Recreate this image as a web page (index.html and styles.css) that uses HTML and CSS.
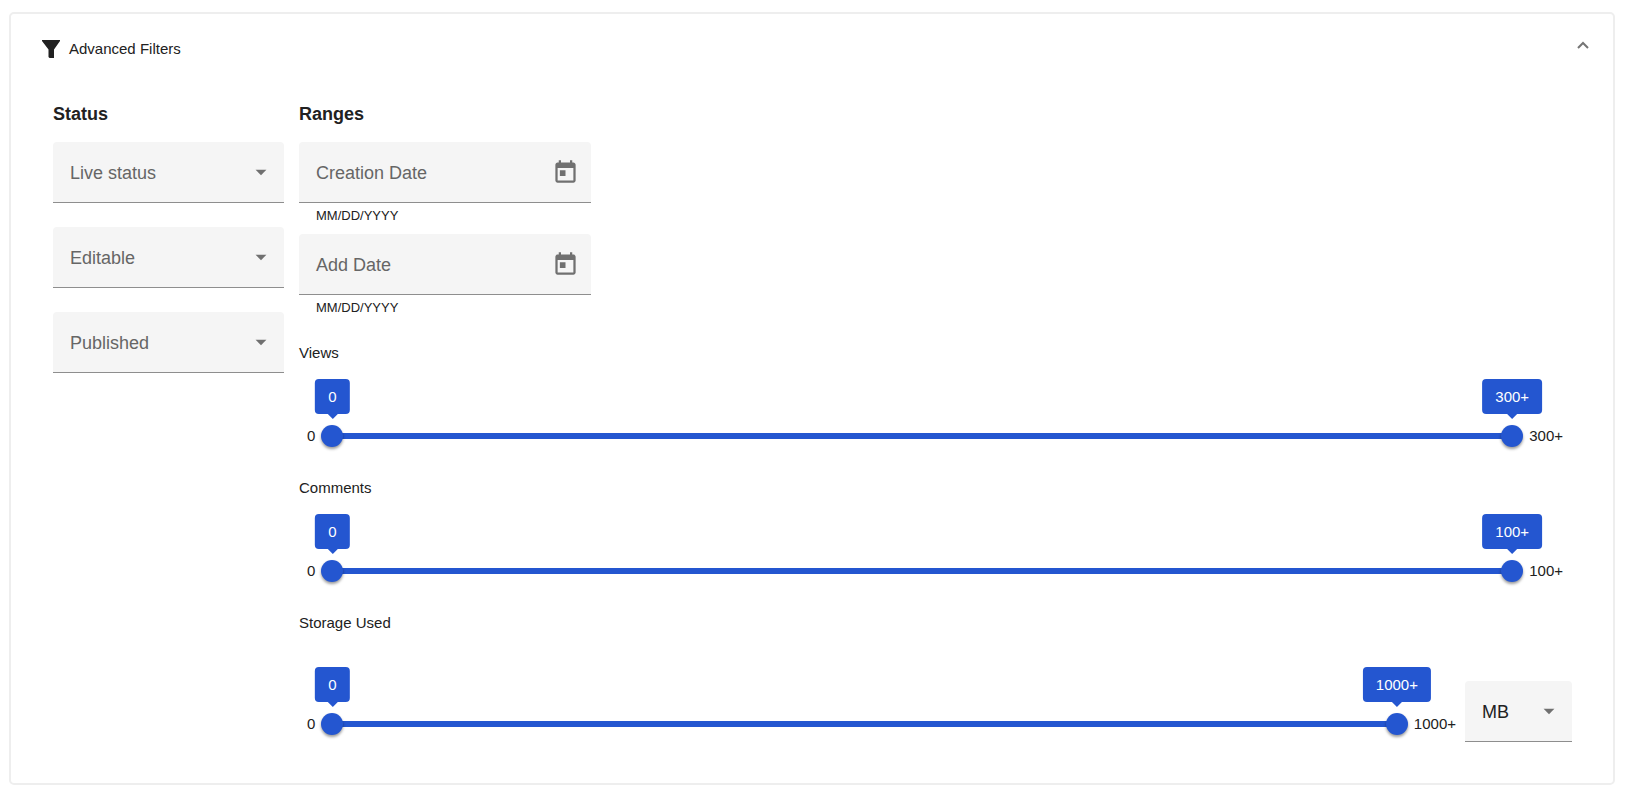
FILE: index.html
```html
<!DOCTYPE html>
<html lang="en">

<head>
    <meta charset="UTF-8">
    <meta name="viewport" content="width=device-width, initial-scale=1.0">
    <title>Advanced Filters</title>
    <link rel="stylesheet" href="styles.css">
</head>

<body>
    <section class="panel">
        <header class="panel-header">
            <svg class="filter-icon" viewBox="0 0 18 18" aria-hidden="true">
                <path d="M0 0h18v1L12 9.500V18H7.500L6.500 17V9.500L0 1z" />
            </svg>
            <span class="panel-title">Advanced Filters</span>
            <button class="toggle" type="button" aria-label="Collapse filters" aria-expanded="true">
                <svg viewBox="0 0 12 8" aria-hidden="true">
                    <path d="M1 7l5-5 5 5" />
                </svg>
            </button>
        </header>

        <form class="filters">
            <!-- Status -->
            <div class="status">
                <h2>Status</h2>
                <div class="status-fields">
                    <div class="field">
                        <select id="live-status">
                            <option value=""></option>
                            <option>Live</option>
                            <option>Offline</option>
                        </select>
                        <label for="live-status">Live status</label>
                        <svg class="arrow" viewBox="0 0 24 24" aria-hidden="true"><path d="M7 10l5 5 5-5z" /></svg>
                    </div>
                    <div class="field">
                        <select id="editable">
                            <option value=""></option>
                            <option>Yes</option>
                            <option>No</option>
                        </select>
                        <label for="editable">Editable</label>
                        <svg class="arrow" viewBox="0 0 24 24" aria-hidden="true"><path d="M7 10l5 5 5-5z" /></svg>
                    </div>
                    <div class="field">
                        <select id="published">
                            <option value=""></option>
                            <option>Yes</option>
                            <option>No</option>
                        </select>
                        <label for="published">Published</label>
                        <svg class="arrow" viewBox="0 0 24 24" aria-hidden="true"><path d="M7 10l5 5 5-5z" /></svg>
                    </div>
                </div>
            </div>

            <!-- Ranges -->
            <div class="ranges">
                <h2>Ranges</h2>
                <div class="date">
                    <div class="field">
                        <input id="creation-date" type="text" placeholder=" " aria-describedby="creation-help">
                        <label for="creation-date">Creation Date</label>
                        <button class="calendar" type="button" aria-label="Pick creation date">
                            <svg viewBox="0 0 24 24" aria-hidden="true"><path d="M19 3h-1V1h-2v2H8V1H6v2H5c-1.110 0-2 .9-2 2v14c0 1.100.89 2 2 2h14c1.100 0 2-.9 2-2V5c0-1.100-.9-2-2-2zm0 16H5V8h14v11zM7 10h5v5H7z" /></svg>
                        </button>
                    </div>
                    <p class="help" id="creation-help">MM/DD/YYYY</p>
                </div>
                <div class="date">
                    <div class="field">
                        <input id="add-date" type="text" placeholder=" " aria-describedby="add-help">
                        <label for="add-date">Add Date</label>
                        <button class="calendar" type="button" aria-label="Pick add date">
                            <svg viewBox="0 0 24 24" aria-hidden="true"><path d="M19 3h-1V1h-2v2H8V1H6v2H5c-1.110 0-2 .9-2 2v14c0 1.100.89 2 2 2h14c1.100 0 2-.9 2-2V5c0-1.100-.9-2-2-2zm0 16H5V8h14v11zM7 10h5v5H7z" /></svg>
                        </button>
                    </div>
                    <p class="help" id="add-help">MM/DD/YYYY</p>
                </div>

                <fieldset class="range">
                    <legend>Views</legend>
                    <div class="range-row">
                        <div class="slider">
                            <span>0</span>
                            <div class="slider-body">
                                <div class="track">
                                    <div class="track-fill"></div>
                                    <output class="bubble" style="left: 0%">0</output>
                                    <output class="bubble" style="left: 100%">300+</output>
                                </div>
                                <input type="range" min="0" max="300" value="0" aria-label="Minimum views">
                                <input type="range" min="0" max="300" value="300" aria-label="Maximum views">
                            </div>
                            <span>300+</span>
                        </div>
                    </div>
                </fieldset>

                <fieldset class="range">
                    <legend>Comments</legend>
                    <div class="range-row">
                        <div class="slider">
                            <span>0</span>
                            <div class="slider-body">
                                <div class="track">
                                    <div class="track-fill"></div>
                                    <output class="bubble" style="left: 0%">0</output>
                                    <output class="bubble" style="left: 100%">100+</output>
                                </div>
                                <input type="range" min="0" max="100" value="0" aria-label="Minimum comments">
                                <input type="range" min="0" max="100" value="100" aria-label="Maximum comments">
                            </div>
                            <span>100+</span>
                        </div>
                    </div>
                </fieldset>

                <fieldset class="range">
                    <legend>Storage Used</legend>
                    <div class="range-row with-unit">
                        <div class="slider">
                            <span>0</span>
                            <div class="slider-body">
                                <div class="track">
                                    <div class="track-fill"></div>
                                    <output class="bubble" style="left: 0%">0</output>
                                    <output class="bubble" style="left: 100%">1000+</output>
                                </div>
                                <input type="range" min="0" max="1000" value="0" aria-label="Minimum storage used">
                                <input type="range" min="0" max="1000" value="1000" aria-label="Maximum storage used">
                            </div>
                            <span>1000+</span>
                        </div>
                        <div class="field unit">
                            <select aria-label="Storage unit">
                                <option>KB</option>
                                <option selected>MB</option>
                                <option>GB</option>
                            </select>
                            <svg class="arrow" viewBox="0 0 24 24" aria-hidden="true"><path d="M7 10l5 5 5-5z" /></svg>
                        </div>
                    </div>
                </fieldset>
            </div>
        </form>
    </section>

    <script>
        // Keep the bubbles and the filled part in step with the two thumbs
        document.querySelectorAll('.slider-body').forEach(slider => {
            const inputs = slider.querySelectorAll('input');
            const bubbles = slider.querySelectorAll('.bubble');
            const fill = slider.querySelector('.track-fill');

            function update() {
                const percents = [...inputs].map(input => input.value / input.max * 100);
                inputs.forEach((input, i) => {
                    bubbles[i].style.left = `${percents[i]}%`;
                    bubbles[i].textContent = input.value === input.max ? `${input.value}+` : input.value;
                });
                fill.style.marginLeft = `${Math.min(...percents)}%`;
                fill.style.width = `${Math.abs(percents[1] - percents[0])}%`;
            }

            inputs.forEach(input => input.addEventListener('input', update));
            update();
        });

        // Hide and show the filters
        const toggle = document.querySelector('.toggle');
        toggle.addEventListener('click', () => {
            const form = document.querySelector('.filters');
            form.hidden = !form.hidden;
            toggle.setAttribute('aria-expanded', !form.hidden);
        });
    </script>
</body>

</html>
```

FILE: styles.css
```css
* {
    box-sizing: border-box;
}

body {
    margin: 12px 13px 0 9px;
    font-family: "Liberation Sans", Arial, sans-serif;
    font-size: 15px;
    line-height: 20px;
    color: #212121;
    background: white;
}

/* Panel */
.panel {
    border: 2px solid #eee;
    border-radius: 5px;
    padding: 25px 24px 41px 31px;
}

.panel-header {
    display: flex;
    align-items: center;
    gap: 9px;
}

.filter-icon {
    width: 18px;
    height: 18px;
    fill: #212121;
}

.panel-title {
    flex: 1;
}

.toggle {
    display: flex;
    padding: 0 0 8px;
    border: none;
    background: none;
    cursor: pointer;
}

.toggle svg {
    width: 12px;
    height: 8px;
    fill: none;
    stroke: #757575;
    stroke-width: 2;
}

.filters {
    display: flex;
    gap: 15px;
    padding: 43px 17px 0 11px;
}

.filters[hidden] {
    display: none;
}

h2 {
    margin: 0 0 16px;
    font-size: 18px;
    line-height: 24px;
}

/* Fields */
.status {
    width: 231px;
}

.status-fields {
    display: flex;
    flex-direction: column;
    gap: 24px;
}

.field {
    position: relative;
    height: 61px;
}

.field select,
.field input {
    width: 100%;
    height: 100%;
    padding: 2px 17px 0;
    border: none;
    border-bottom: 1px solid #8e8e8e;
    border-radius: 4px 4px 0 0;
    background: #f5f5f5;
    color: #212121;
    font: inherit;
    font-size: 18px;
    appearance: none;
}

.field label {
    position: absolute;
    left: 17px;
    top: 21px;
    font-size: 18px;
    color: #666;
    pointer-events: none;
}

/* Shrink the label once something is picked or typed */
.field select:has(option:not([value=""]):checked) + label,
.field input:focus + label,
.field input:not(:placeholder-shown) + label {
    top: 2px;
    font-size: 13px;
}

.arrow {
    position: absolute;
    right: 10px;
    top: 17px;
    width: 26px;
    height: 26px;
    fill: #707070;
    pointer-events: none;
}

.calendar {
    position: absolute;
    right: 12px;
    top: 17px;
    padding: 0;
    border: none;
    background: none;
    cursor: pointer;
}

.calendar svg {
    display: block;
    width: 27px;
    height: 27px;
    fill: #707070;
}

/* Ranges */
.ranges {
    flex: 1;
}

.date {
    width: 292px;
}

.help {
    margin: 0;
    padding: 3px 17px 8px;
    font-size: 13px;
}

.range {
    margin: 0;
    padding: 0;
    border: none;
    height: 135px;
}

.date + .range {
    margin-top: 17px;
}

.range legend {
    padding: 0;
}

.range-row {
    display: flex;
    align-items: center;
    gap: 9px;
    padding: 62px 0 0;
}

.range-row.with-unit {
    height: 61px;
    margin-top: 48px;
    padding: 0;
}

.range:last-child {
    height: auto;
}

.slider {
    flex: 1;
    display: flex;
    align-items: center;
    gap: 6px;
    padding: 0 9px 0 8px;
}

.with-unit .slider {
    padding-top: 24px;
    padding-right: 0;
}

/* Track and both inputs share one grid cell */
.slider-body {
    flex: 1;
    display: grid;
    align-items: center;
}

.track,
.slider-body input {
    grid-area: 1 / 1;
}

.track {
    position: relative;
    height: 6px;
    margin: 0 11px;
    background: #c8d5f4;
}

.track-fill {
    height: 6px;
    background: #2456d0;
}

.slider-body input {
    width: 100%;
    height: 22px;
    margin: 0;
    background: none;
    appearance: none;
    pointer-events: none;
    z-index: 1;
}

.slider-body input::-webkit-slider-thumb {
    appearance: none;
    width: 22px;
    height: 22px;
    border-radius: 50%;
    background: #2456d0;
    box-shadow: 0 2px 3px rgba(0, 0, 0, 0.4);
    cursor: pointer;
    pointer-events: auto;
}

/* Value bubbles */
.bubble {
    position: absolute;
    bottom: 25px;
    transform: translateX(-50%);
    padding: 0 13px;
    border-radius: 4px;
    background: #2456d0;
    color: white;
    line-height: 35px;
}

.bubble::after {
    content: "";
    position: absolute;
    left: 50%;
    top: 100%;
    margin-left: -5px;
    border: 5px solid transparent;
    border-top-color: #2456d0;
    border-bottom: none;
}

.unit {
    width: 107px;
}
```
